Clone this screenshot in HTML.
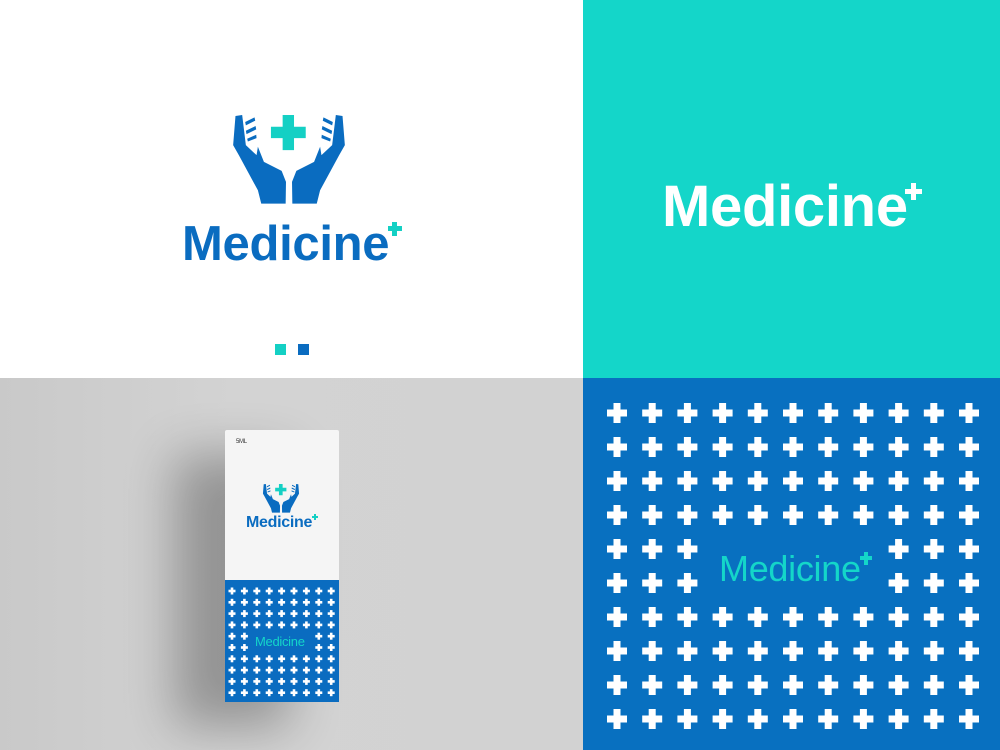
<!DOCTYPE html>
<html><head><meta charset="utf-8"><style>
*{margin:0;padding:0;box-sizing:border-box}
body{width:1000px;height:750px;position:relative;overflow:hidden;font-family:"Liberation Sans",sans-serif}
.abs{position:absolute}
.t{white-space:nowrap;line-height:1;letter-spacing:-0.3px}
</style></head><body>
<svg width="0" height="0" style="position:absolute">
<defs>
<symbol id="hands" viewBox="170 30 370 290">
<g fill="#0a6cc0">
<path d="M195,48 L215,45 L226,135 L258,165 L262,140 L280,185 L333,212 L346,245 L345,310 L272,310 L262,270 L205,165 L188,135 Z"/>
<path transform="translate(710,0) scale(-1,1)" d="M195,48 L215,45 L226,135 L258,165 L262,140 L280,185 L333,212 L346,245 L345,310 L272,310 L262,270 L205,165 L188,135 Z"/>
<path d="M224,66 L252,52 L254,62 L226,76Z M226,92 L255,78 L257,88 L228,102Z M230,116 L257,104 L258,114 L232,124Z"/>
<path transform="translate(710,0) scale(-1,1)" d="M224,66 L252,52 L254,62 L226,76Z M226,92 L255,78 L257,88 L228,102Z M230,116 L257,104 L258,114 L232,124Z"/>
</g>
<path fill="#14d0c4" d="M336,45 h34 v35 h35 v34 h-35 v36 h-34 v-36 h-35 v-34 h35 Z"/>
</symbol>
</defs></svg>

<div class="abs" style="left:0;top:0;width:583px;height:378px;background:#fff"></div>
<svg class="abs" style="left:227px;top:110px" width="124" height="97"><use href="#hands"/></svg>
<div class="abs t" style="left:182px;top:220px;font-size:49px;font-weight:bold;color:#0a6cc0">Medicine</div>
<div class="abs" style="left:392px;top:222px;width:5px;height:14px;background:#14d0c4"></div>
<div class="abs" style="left:388px;top:226px;width:14px;height:5px;background:#14d0c4"></div>
<div class="abs" style="left:275px;top:344px;width:11px;height:11px;background:#14d0c4"></div>
<div class="abs" style="left:298px;top:344px;width:11px;height:11px;background:#0a6cc0"></div>

<div class="abs" style="left:583px;top:0;width:417px;height:378px;background:#14d6c9"></div>
<div class="abs t" style="left:662px;top:178px;font-size:58px;font-weight:bold;color:#fff">Medicine</div>
<div class="abs" style="left:911px;top:183px;width:5px;height:17px;background:#fff"></div>
<div class="abs" style="left:905px;top:189px;width:17px;height:5px;background:#fff"></div>

<div class="abs" style="left:0;top:378px;width:583px;height:372px;background:linear-gradient(90deg,#c9c9c9,#d3d3d3 40%,#d2d2d2)"></div>
<div class="abs" style="left:225px;top:430px;width:114px;height:272px;background:#f5f5f5;border-radius:2px;box-shadow:-50px 25px 50px rgba(0,0,0,0.3)"></div>
<div class="abs" style="left:225px;top:580px;width:114px;height:122px;background:#0a6cc0"></div>
<div class="abs t" style="left:236px;top:439px;font-size:6px;color:#333">5ML</div>
<svg class="abs" style="left:261px;top:482px" width="40" height="32"><use href="#hands"/></svg>
<div class="abs t" style="left:246px;top:515px;font-size:16px;font-weight:bold;color:#0a6cc0">Medicine</div>
<div class="abs" style="left:314px;top:514px;width:2px;height:6px;background:#14d0c4"></div>
<div class="abs" style="left:312px;top:516px;width:6px;height:2px;background:#14d0c4"></div>
<div class="abs t" style="left:255px;top:635px;font-size:13px;color:#14d6c9">Medicine</div>
<svg class="abs" style="left:225px;top:580px" width="114" height="122" id="boxp"></svg>

<div class="abs" style="left:583px;top:378px;width:417px;height:372px;background:#0870c0"></div>
<svg class="abs" style="left:583px;top:378px" width="417" height="372" id="bigp"></svg>
<div class="abs t" style="left:719px;top:551px;font-size:36px;color:#14d6c9">Medicine</div>
<div class="abs" style="left:864px;top:552px;width:4px;height:13px;background:#14d6c9"></div>
<div class="abs" style="left:860px;top:556px;width:12px;height:4px;background:#14d6c9"></div>

<script>
function crosses(id,ox,oy,cols,rows,dx,dy,s,t,skip){
 var svg=document.getElementById(id),h='';
 for(var r=0;r<rows;r++)for(var c=0;c<cols;c++){
  if(skip(r,c))continue;
  var x=ox+c*dx,y=oy+r*dy;
  h+='<rect x="'+(x-s/2)+'" y="'+(y-t/2)+'" width="'+s+'" height="'+t+'" fill="#fff"/>';
  h+='<rect x="'+(x-t/2)+'" y="'+(y-s/2)+'" width="'+t+'" height="'+s+'" fill="#fff"/>';
 }
 svg.innerHTML=h;
}
crosses('bigp',34,35,11,10,35.2,34,20,7,function(r,c){return (r==4||r==5)&&c>=3&&c<=7});
crosses('boxp',7,11,9,10,12.4,11.3,7,2.6,function(r,c){return (r==4||r==5)&&c>=2&&c<=6});
</script>
</body></html>
